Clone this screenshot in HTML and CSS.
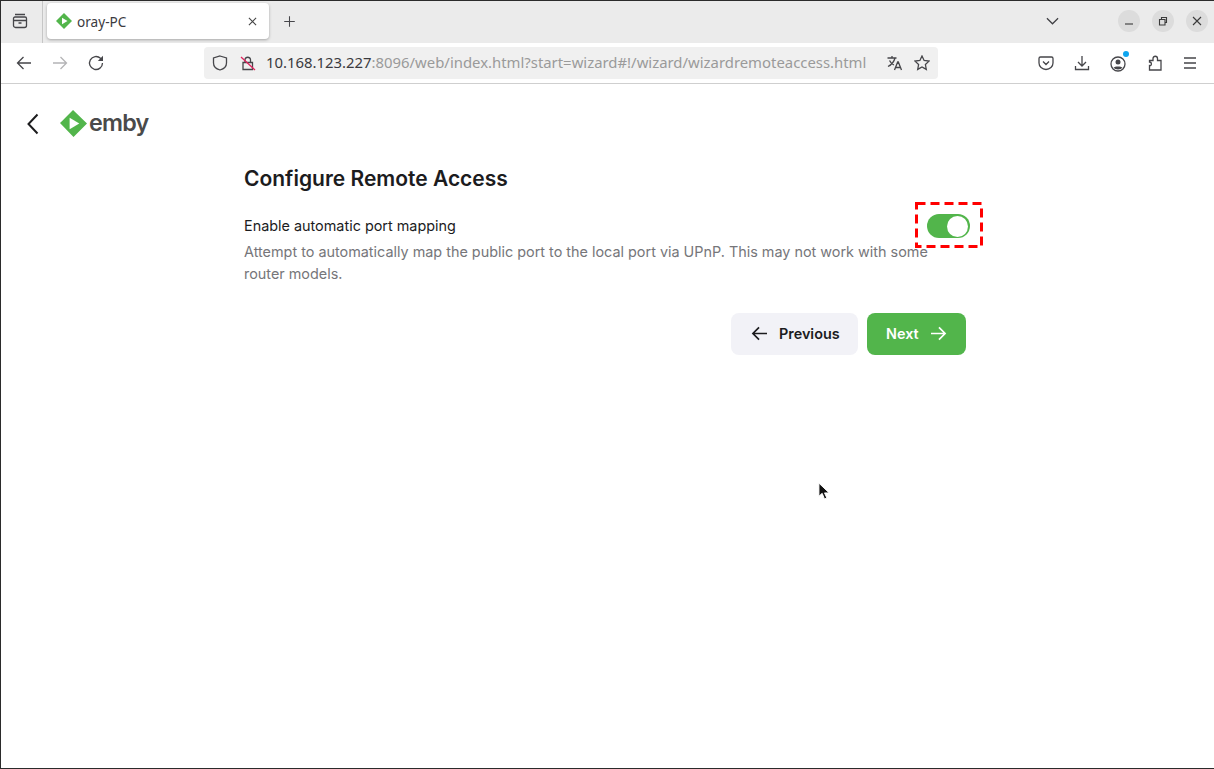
FILE: index.html
```html
<!DOCTYPE html>
<html lang="en">
<head>
  <meta charset="UTF-8">
  <title>oray-PC</title>
  <link rel="stylesheet" href="styles.css">
</head>
<body>
  <div class="window">
    <!-- Tab strip -->
    <div class="tabbar">
      <div class="tab-tools">
        <svg class="icon" viewBox="0 0 16 16"><path d="M3 1.500h10M1.500 5.500a1.500 1.500 0 0 1 1.500-1.500h10a1.500 1.500 0 0 1 1.500 1.500v7a2 2 0 0 1-2 2h-9a2 2 0 0 1-2-2zM1.500 7.500h13M6.500 10h3"/></svg>
      </div>
      <div class="tab">
        <svg class="tab-favicon" viewBox="0 0 16 16"><path class="logo-green" d="M8 0 16 8 8 16 6 14 1 9 0 8 2 6z"/><path class="logo-white" d="M6 4.800 11.500 8 6 11.200z"/></svg>
        <span class="tab-title">oray-PC</span>
        <svg class="tab-close" viewBox="0 0 10 10"><path d="M1 1l8 8M9 1l-8 8"/></svg>
      </div>
      <svg class="icon new-tab" viewBox="0 0 16 16"><path d="M8 1.500v13M1.500 8h13"/></svg>
      <div class="tabbar-right">
        <svg class="tab-list" viewBox="0 0 14 8"><path d="M1 1l6 6 6-6"/></svg>
        <div class="win-buttons">
          <div class="win-btn"><svg viewBox="0 0 10 10"><path d="M1 8h8"/></svg></div>
          <div class="win-btn"><svg viewBox="0 0 10 10"><path d="M1.500 3.500h5.500v5.500h-5.500zM3.500 3.500v-2h5v5h-1.500"/></svg></div>
          <div class="win-btn"><svg viewBox="0 0 10 10"><path d="M1 1l8 8M9 1l-8 8"/></svg></div>
        </div>
      </div>
    </div>

    <!-- Navigation bar -->
    <div class="toolbar">
      <div class="nav-buttons">
        <svg class="icon" viewBox="0 0 16 16"><path d="M15 8H1.500M7.500 2 1.500 8l6 6"/></svg>
        <svg class="icon disabled" viewBox="0 0 16 16"><path d="M1 8h13.500M8.500 2l6 6-6 6"/></svg>
        <svg class="icon" viewBox="0 0 16 16"><path d="M14.500 8A6.500 6.500 0 1 1 12.500 3.300L14.500 5"/><path class="solid" d="M15 .8V6H9.800z"/></svg>
      </div>
      <div class="urlbar">
        <svg class="icon" viewBox="0 0 16 16"><path d="M8 1l6.500 2v5c0 3.500-3 6-6.500 7-3.500-1-6.500-3.500-6.500-7V3z"/></svg>
        <svg class="icon lock" viewBox="0 0 16 16"><path d="M3 7.500h9.500v7h-9.500zM5 7.500V4.500a2.800 2.800 0 0 1 5.500 0v3"/><path class="slash" d="M1 2l14 13"/></svg>
        <div class="url"><span class="url-host">10.168.123.227</span>:8096/web/index.html?start=wizard#!/wizard/wizardremoteaccess.html</div>
        <svg class="icon" viewBox="0 0 16 16"><path d="M.5 3h9M5 1v2M8 3C7 7 4 10 1 11.500M2.500 5.500c1 2 3 4 4.500 4.500M7.500 15l3.200-8 .6 0 3.200 8M8.700 12.500h4.500"/></svg>
        <svg class="icon" viewBox="0 0 16 16"><path d="M8 1l2.100 4.500 4.900.6-3.600 3.400.9 4.900L8 12l-4.300 2.400.9-4.900L1 6.100l4.900-.6z"/></svg>
      </div>
      <div class="toolbar-right">
        <svg class="icon" viewBox="0 0 16 16"><path d="M2.500 2h11A1.500 1.500 0 0 1 15 3.500V8a7 6.500 0 0 1-14 0V3.500A1.500 1.500 0 0 1 2.500 2zM5 6.500l3 3 3-3"/></svg>
        <svg class="icon" viewBox="0 0 16 16"><path d="M8 1v9.500M4 7l4 4 4-4M1.500 11v3.500h13V11"/></svg>
        <div class="account">
          <svg class="icon" viewBox="0 0 16 16"><circle cx="8" cy="8" r="7"/><circle class="solid" cx="8" cy="6" r="2.500"/><path class="solid" d="M3.500 11.500C5 10 11 10 12.500 11.500 11 14 5 14 3.500 11.500z"/></svg>
          <span class="account-dot"></span>
        </div>
        <svg class="icon puzzle" viewBox="0 0 16 16"><path d="M2.500 15v-4.500c2.500.5 2.500-3.500 0-3.500V5.500H6V3.500c0-3 4.500-3 4.500 0v2h3.500V15z"/></svg>
        <svg class="icon" viewBox="0 0 16 16"><path d="M2 3h12M2 8h12M2 13h12"/></svg>
      </div>
    </div>

    <!-- Page -->
    <div class="page">
      <header class="page-header">
        <svg class="back" viewBox="0 0 12 22"><path d="M10.500 1.500 1.500 11l9 9.500"/></svg>
        <div class="logo">
          <svg class="logo-mark" viewBox="0 0 28 28"><path class="logo-green" d="M13.500 0 28 14 14 28 0 13.500 3 10.500 5 8.500z"/><path class="logo-white" d="M10 8 20 14 10 20z"/></svg>
          <span class="logo-text">emby</span>
        </div>
      </header>

      <main class="wizard">
        <h1>Configure Remote Access</h1>
        <div class="setting">
          <div class="setting-row">
            <span class="setting-label">Enable automatic port mapping</span>
            <span class="toggle"><span class="toggle-knob"></span></span>
          </div>
          <p class="setting-desc">Attempt to automatically map the public port to the local port via UPnP. This may not work with some router models.</p>
        </div>
        <div class="actions">
          <button class="btn btn-secondary">
            <svg viewBox="0 0 18 16"><path d="M17 8H2M8.500 1.500 2 8l6.500 6.500"/></svg>
            Previous
          </button>
          <button class="btn btn-primary">
            Next
            <svg viewBox="0 0 18 16"><path d="M1 8h15M9.500 1.500 16 8l-6.500 6.500"/></svg>
          </button>
        </div>
      </main>

      <!-- Annotation and pointer sit on top of the page -->
      <svg class="highlight-box" viewBox="0 0 68 46"><rect x="1.500" y="1.500" width="65" height="43"/></svg>
      <svg class="cursor" viewBox="0 0 14 20"><path d="M1 1v14l3.500-3 2.500 6 2.500-1-2.500-5.500h5z"/></svg>
    </div>
  </div>
</body>
</html>
```

FILE: styles.css
```css
* {
  box-sizing: border-box;
}

html, body {
  margin: 0;
  height: 100%;
}

body {
  font-family: "Noto Sans", sans-serif;
  background: #fff;
  overflow: hidden;
}

.window {
  height: 769px;
  border: 1px solid #2b2b2b;
  border-right: 0;
  display: flex;
  flex-direction: column;
}

svg {
  fill: none;
  stroke: currentColor;
  stroke-width: 1.300;
}

.icon {
  width: 16px;
  height: 16px;
  color: #46464a;
  flex: none;
}

.solid {
  fill: currentColor;
  stroke: none;
}

.logo-green {
  fill: #52b54b;
  stroke: none;
}

.logo-white {
  fill: #fff;
  stroke: none;
}

/* tab strip */
.tabbar {
  height: 42px;
  background: #ebebeb;
  display: flex;
  align-items: center;
  flex: none;
}

.tab-tools {
  width: 42px;
  height: 42px;
  border-right: 1px solid #c6c6c6;
  display: flex;
  align-items: center;
  justify-content: center;
  padding: 0 4px 2px 0;
  margin-right: 4px;
}

.tab {
  width: 222px;
  height: 36px;
  background: #fff;
  border-radius: 4px;
  box-shadow: 0 1px 3px rgba(0, 0, 0, 0.3);
  display: flex;
  align-items: center;
  padding: 0 12px 0 9px;
  margin-top: -2px;
}

.tab-favicon {
  width: 16px;
  height: 16px;
  flex: none;
}

.tab-title {
  font-size: 13.600px;
  color: #3b3b3f;
  margin-left: 5px;
  flex: 1;
}

.tab-close {
  width: 9px;
  height: 9px;
  color: #444;
  stroke-width: 1.200;
}

.new-tab {
  width: 13px;
  height: 13px;
  margin: -2px 0 0 14px;
}

.tabbar-right {
  margin: -2px 0 0 auto;
  display: flex;
  align-items: center;
}

.tab-list {
  width: 13px;
  height: 8px;
  color: #3f3f43;
  margin-right: 59px;
}

.win-buttons {
  display: flex;
  gap: 12px;
  margin-right: 6px;
}

.win-btn {
  width: 22px;
  height: 22px;
  border-radius: 50%;
  background: #dcdcdc;
  display: flex;
  align-items: center;
  justify-content: center;
  color: #3a3a3a;
}

.win-btn svg {
  width: 10px;
  height: 10px;
  stroke-width: 1.100;
}

/* navigation bar */
.toolbar {
  height: 41px;
  background: #fff;
  border-bottom: 1px solid #cfcfcf;
  display: flex;
  align-items: center;
  flex: none;
}

.nav-buttons {
  display: flex;
  gap: 20px;
  margin-left: 15px;
  width: 188px;
}

.disabled {
  color: #b4b4b6;
}

.urlbar {
  width: 734px;
  height: 32px;
  background: #f0f0f0;
  border-radius: 4px;
  display: flex;
  align-items: center;
  padding: 0 8px;
  gap: 11px;
}

.lock {
  margin-left: 1px;
  margin-right: -1px;
}

.slash {
  stroke: #e0245e;
}

.url {
  font-size: 14.880px;
  color: #9a9a9a;
  white-space: nowrap;
  flex: 1;
  margin: -3px 3px 0 0;
  overflow: hidden;
}

.url-host {
  color: #3b3b3f;
}

.toolbar-right {
  display: flex;
  gap: 20px;
  margin-left: 100px;
}

.puzzle {
  margin-left: 1px;
  margin-right: -1px;
}

.account {
  position: relative;
  height: 16px;
}

.account-dot {
  position: absolute;
  top: -4px;
  right: -3px;
  width: 6px;
  height: 6px;
  border-radius: 50%;
  background: #0ea5ef;
}

/* page */
.page {
  flex: 1;
  position: relative;
  font-family: Inter, sans-serif;
  color: #1c1c1e;
}

.page-header {
  height: 78px;
  display: flex;
  align-items: center;
  padding-left: 26px;
}

.back {
  width: 12px;
  height: 22px;
  color: #1c1c1e;
  stroke-width: 2;
  margin-top: 1px;
}

.logo {
  display: flex;
  align-items: center;
  margin-left: 21px;
}

.logo-mark {
  width: 27px;
  height: 27px;
}

.logo-text {
  font-size: 23.300px;
  font-weight: 600;
  color: #4a4a4a;
  letter-spacing: -0.800px;
  margin-left: 2px;
  margin-top: -1px;
}

.wizard {
  margin-left: 243px;
  width: 726px;
  padding-top: 2px;
}

h1 {
  font-size: 21px;
  font-weight: 600;
  line-height: 30px;
  margin: 0 0 20px;
}

.setting-row {
  display: flex;
  align-items: flex-start;
  justify-content: space-between;
  height: 24px;
}

.setting-label {
  font-size: 14.400px;
  line-height: 24px;
}

.toggle {
  width: 43px;
  height: 24px;
  border-radius: 12px;
  background: #52b54b;
  display: flex;
  align-items: center;
  justify-content: flex-end;
  padding-right: 2px;
}

.toggle-knob {
  width: 21px;
  height: 21px;
  border-radius: 50%;
  background: #fff;
}

.setting-desc {
  font-size: 14.400px;
  line-height: 22px;
  color: #76767a;
  margin: 3px 0 0;
  width: 690px;
}

.actions {
  display: flex;
  justify-content: flex-end;
  gap: 9px;
  margin-top: 28px;
  padding-right: 4px;
}

.btn {
  height: 42px;
  border: 0;
  border-radius: 8px;
  font-family: Inter, sans-serif;
  font-size: 14.400px;
  font-weight: 600;
  display: flex;
  align-items: center;
  gap: 11px;
  padding-bottom: 2px;
}

.btn svg {
  width: 17px;
  height: 15px;
  stroke-width: 1.800;
}

.btn-secondary {
  width: 127px;
  background: #f2f2f7;
  color: #1c1c1e;
  padding-left: 20px;
}

.btn-primary {
  width: 99px;
  background: #52b54b;
  color: #fff;
  padding-left: 19px;
}

.highlight-box {
  position: absolute;
  left: 914px;
  top: 118px;
  width: 68px;
  height: 46px;
  stroke: #f00;
  stroke-width: 3;
  stroke-dasharray: 9 5;
}

.cursor {
  position: absolute;
  left: 817px;
  top: 398px;
  width: 13px;
  height: 19px;
  fill: #111;
  stroke: #fff;
  stroke-width: 1;
}
```
